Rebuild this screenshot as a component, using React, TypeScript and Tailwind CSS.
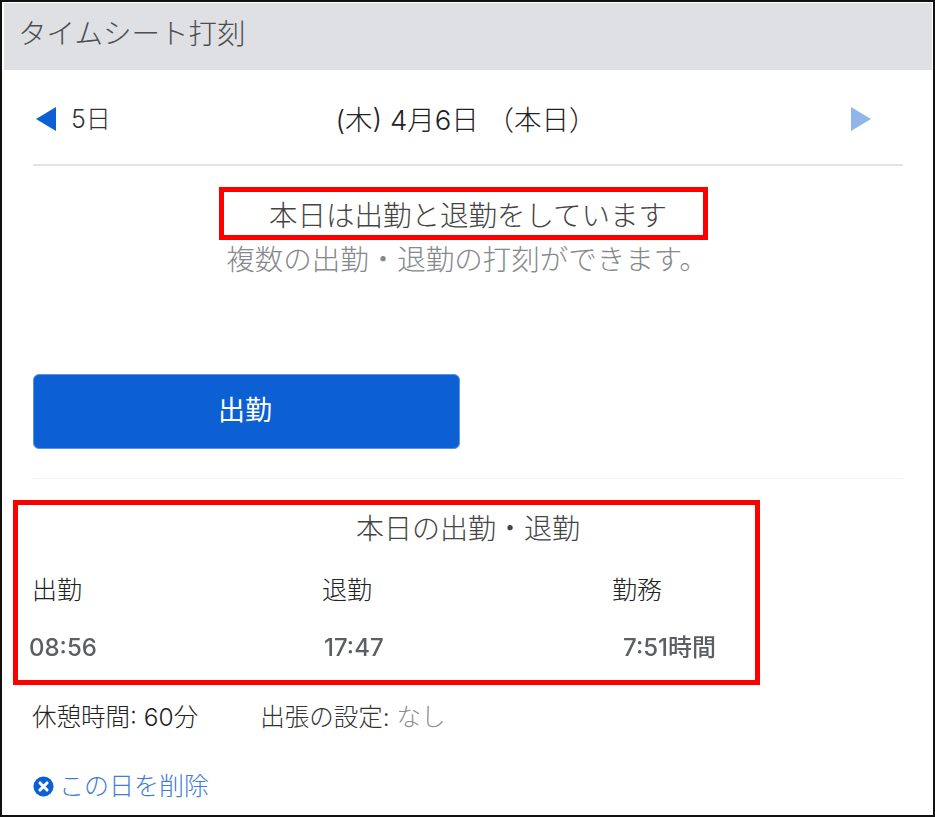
import React from 'react';

const FONT = "font-['Inter','Noto_Sans_CJK_JP',sans-serif]";

const SUMMARY = [
  { label: '出勤', value: '08:56', labelClass: 'w-[290px] -ml-px', valueClass: 'w-[295px] -ml-1' },
  { label: '退勤', value: '17:47', labelClass: 'w-[290px]', valueClass: 'w-[299px]' },
  { label: '勤務', value: '7:51時間', labelClass: 'w-[140px]', valueClass: 'w-[140px]' },
];

export default function App() {
  return (
    <div className={`${FONT} relative w-[935px] h-[817px] bg-white border-2 border-[#111] pt-px pl-[2px] pr-px overflow-hidden text-[#333]`}>
      {/* Header */}
      <div className="h-[67px] bg-[#dfe0e4] pl-[14px] flex items-center">
        <h1 className="text-[28.5px] font-light leading-none text-[#4a4d52] pb-1">タイムシート打刻</h1>
      </div>

      <div className="px-[29px]">
        {/* Date navigation */}
        <div className="h-[96px] flex items-center justify-between border-b-2 border-[#e3e3e3] pt-[3px]">
          <div className="flex items-center w-[180px]">
            <div className="w-0 h-0 border-y-[12px] border-y-transparent border-r-[20px] border-r-[#0d60d4] ml-[3px]"></div>
            <span className="text-[25px] font-light ml-[15px] text-[#333] mt-[2px]">5日</span>
          </div>
          <span className="text-[27.5px] font-light text-[#222] mr-[4px] mt-[4px]">(木) 4月6日 （本日）</span>
          <div className="w-[180px] flex justify-end pr-[32px]">
            <div className="w-0 h-0 border-y-[12px] border-y-transparent border-l-[20px] border-l-[#8fb5ea]"></div>
          </div>
        </div>

        {/* Status */}
        <div className="text-center pt-[32px]">
          <p className="text-[28.5px] font-light leading-[36px] text-[#444]">本日は出勤と退勤をしています</p>
          <p className="text-[28.5px] font-light leading-[43px] text-[#85888c] mt-[4px] mr-[2px]">複数の出勤・退勤の打刻ができます。</p>
        </div>

        {/* Clock button */}
        <button className="mt-[93px] block w-[427px] h-[75px] bg-[#0d60d4] border border-[#5a93e3] rounded-[6px] text-white text-[27px] font-normal leading-none pr-[3px] pb-[2px]">
          出勤
        </button>

        <div className="mt-[29px] border-t border-[#f3f3f3]"></div>

        {/* Today's summary */}
        <h2 className="mt-[30px] text-center text-[28px] font-light leading-[40px] text-[#444]">本日の出勤・退勤</h2>
        <div className="mt-[23px] flex text-[25px] font-light leading-[36px] text-[#222]">
          {SUMMARY.map((s) => (
            <div key={s.label} className={s.labelClass}>{s.label}</div>
          ))}
        </div>
        <div className="mt-[22px] flex text-[24px] font-medium leading-[36px] text-[#5b5e62]">
          {SUMMARY.map((s) => (
            <div key={s.value} className={`${s.valueClass} blur-[0.6px]`}>{s.value}</div>
          ))}
        </div>

        {/* Break and business trip */}
        <div className="mt-[33px] flex text-[24.5px] font-light leading-[36px] text-[#222]">
          <span className="-ml-px">休憩時間: 60分</span>
          <span className="ml-[62px] text-[#333]">出張の設定: <span className="text-[#8a8d91]">なし</span></span>
        </div>

        {/* Delete */}
        <div className="mt-[33px] flex items-center text-[25px] font-light leading-[36px] text-[#3f7bd8]">
          <svg viewBox="0 0 22 22" className="w-[21px] h-[21px] shrink-0">
            <circle cx="11" cy="11" r="10.5" fill="#0d60d4" />
            <path d="M7.3 7.3l7.4 7.4M14.7 7.3l-7.4 7.4" stroke="#fff" strokeWidth="3.2" strokeLinecap="round" />
          </svg>
          <span className="ml-[5px]">この日を削除</span>
        </div>
      </div>

      {/* Red annotation boxes */}
      <div className="absolute left-[217px] top-[185px] w-[489px] h-[53px] border-[5px] border-[#ff0000]"></div>
      <div className="absolute left-[11px] top-[498px] w-[747px] h-[185px] border-[5px] border-[#ff0000]"></div>
    </div>
  );
}
